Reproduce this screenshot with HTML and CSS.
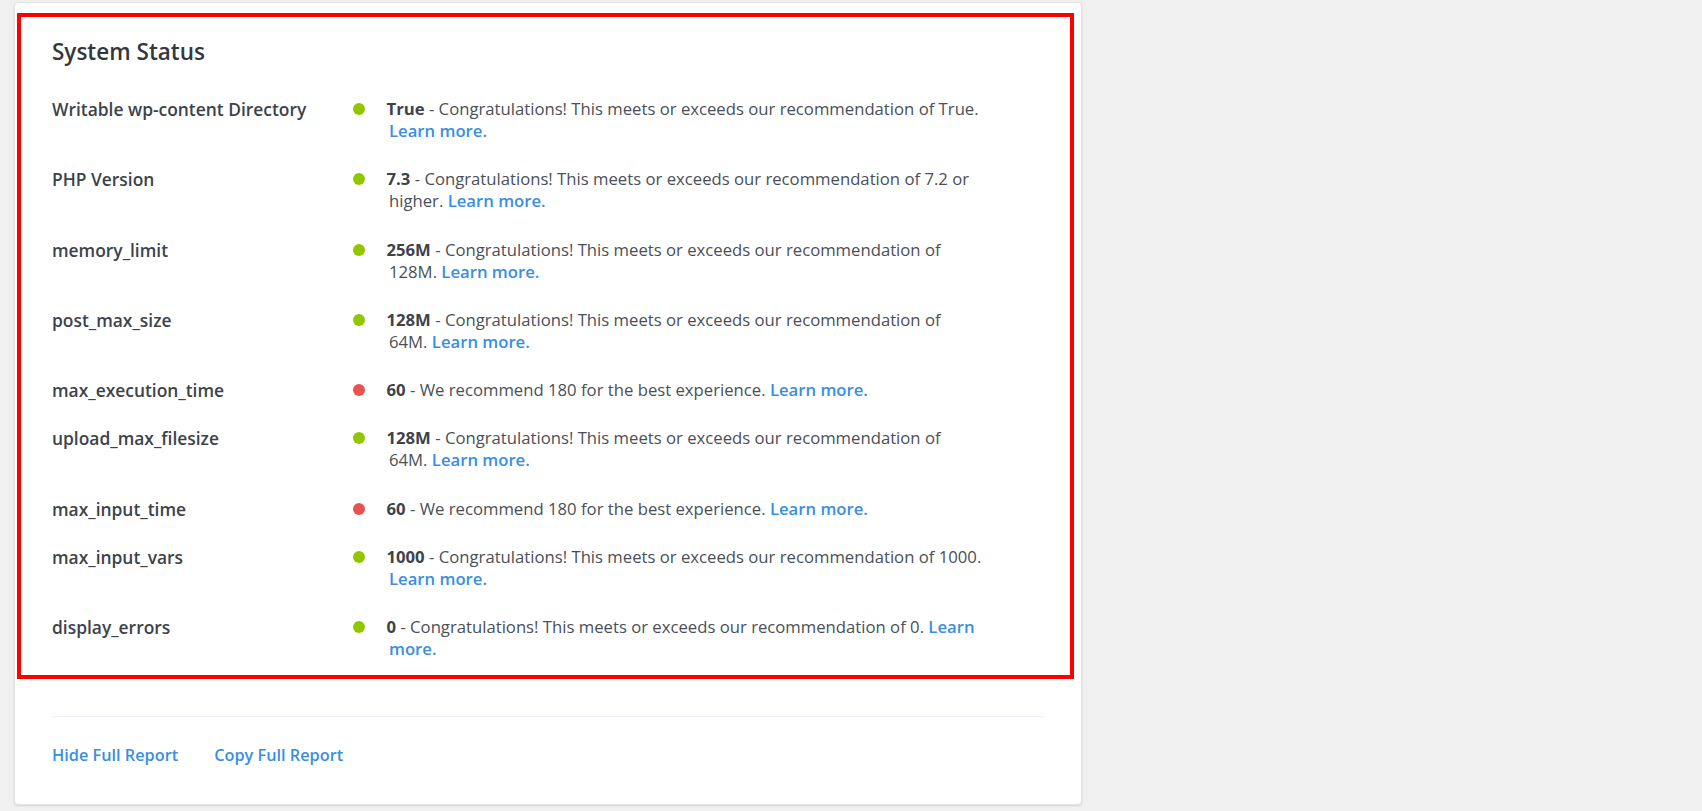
FILE: index.html
```html
<!DOCTYPE html>
<html lang="en">
<head>
    <meta charset="UTF-8">
    <meta name="viewport" content="width=device-width, initial-scale=1.0">
    <title>System Status</title>
    <link rel="stylesheet" href="styles.css">
</head>
<body>
    <div class="card">
        <div class="highlight"></div>
        <h2 class="card-title">System Status</h2>
        <div class="status-list">
            <div class="status-row">
                <div class="status-label">Writable wp-content Directory</div>
                <span class="dot ok"></span>
                <div class="status-text"><strong>True</strong> - Congratulations! This meets or exceeds our recommendation of True. <a href="#">Learn more.</a></div>
            </div>
            <div class="status-row">
                <div class="status-label">PHP Version</div>
                <span class="dot ok"></span>
                <div class="status-text"><strong>7.3</strong> - Congratulations! This meets or exceeds our recommendation of 7.2 or higher. <a href="#">Learn more.</a></div>
            </div>
            <div class="status-row">
                <div class="status-label">memory_limit</div>
                <span class="dot ok"></span>
                <div class="status-text"><strong>256M</strong> - Congratulations! This meets or exceeds our recommendation of 128M. <a href="#">Learn more.</a></div>
            </div>
            <div class="status-row">
                <div class="status-label">post_max_size</div>
                <span class="dot ok"></span>
                <div class="status-text"><strong>128M</strong> - Congratulations! This meets or exceeds our recommendation of 64M. <a href="#">Learn more.</a></div>
            </div>
            <div class="status-row">
                <div class="status-label">max_execution_time</div>
                <span class="dot bad"></span>
                <div class="status-text"><strong>60</strong> - We recommend 180 for the best experience. <a href="#">Learn more.</a></div>
            </div>
            <div class="status-row">
                <div class="status-label">upload_max_filesize</div>
                <span class="dot ok"></span>
                <div class="status-text"><strong>128M</strong> - Congratulations! This meets or exceeds our recommendation of 64M. <a href="#">Learn more.</a></div>
            </div>
            <div class="status-row">
                <div class="status-label">max_input_time</div>
                <span class="dot bad"></span>
                <div class="status-text"><strong>60</strong> - We recommend 180 for the best experience. <a href="#">Learn more.</a></div>
            </div>
            <div class="status-row">
                <div class="status-label">max_input_vars</div>
                <span class="dot ok"></span>
                <div class="status-text"><strong>1000</strong> - Congratulations! This meets or exceeds our recommendation of 1000. <a href="#">Learn more.</a></div>
            </div>
            <div class="status-row">
                <div class="status-label">display_errors</div>
                <span class="dot ok"></span>
                <div class="status-text"><strong>0</strong> - Congratulations! This meets or exceeds our recommendation of 0. <a href="#">Learn more.</a></div>
            </div>
        </div>
        <div class="card-footer">
            <a href="#">Hide Full Report</a>
            <a href="#">Copy Full Report</a>
        </div>
    </div>
</body>
</html>
```

FILE: styles.css
```css
body {
    font-family: "Open Sans", "Liberation Sans", sans-serif;
    margin: 0;
    padding: 2px 14px;
    background-color: #f0f0f0;
    color: #3c434a;
}
.card {
    position: relative;
    width: 1068px;
    box-sizing: border-box;
    background: #fff;
    border: 1px solid #e3e3e3;
    border-radius: 4px;
    box-shadow: 0 1px 2px rgba(0, 0, 0, 0.12);
    padding: 34px 37px 38px;
}
.highlight {
    position: absolute;
    left: 2px;
    top: 10px;
    width: 1057px;
    height: 666px;
    box-sizing: border-box;
    border: 4px solid #ff0000;
    pointer-events: none;
}
.card-title {
    margin: 0;
    font-size: 22.5px;
    font-weight: 600;
    line-height: 30px;
    color: #33383d;
}
.status-list {
    display: flex;
    flex-direction: column;
    gap: 26.3px;
    margin-top: 31px;
}
.status-row {
    display: flex;
    align-items: flex-start;
    line-height: 22px;
}
.status-label {
    flex: 0 0 301px;
    font-size: 17.4px;
    font-weight: 600;
    color: #3c434a;
}
.dot {
    flex: 0 0 12px;
    height: 12px;
    margin-top: 5px;
    border-radius: 50%;
}
.dot.ok {
    background-color: #92c700;
}
.dot.bad {
    background-color: #ea5252;
}
.status-text {
    width: 593px;
    margin-left: 24px;
    text-indent: -2.5px;
    font-size: 16.7px;
    color: #4a5057;
}
.status-text strong {
    font-weight: 700;
    color: #3c434a;
}
a {
    color: #3a8ee0;
    font-weight: 600;
    text-decoration: none;
}
.card-footer {
    display: flex;
    gap: 36px;
    margin-top: 56px;
    padding-top: 27px;
    border-top: 1px solid #edf1f5;
    line-height: 22px;
    font-size: 16.3px;
}
```
